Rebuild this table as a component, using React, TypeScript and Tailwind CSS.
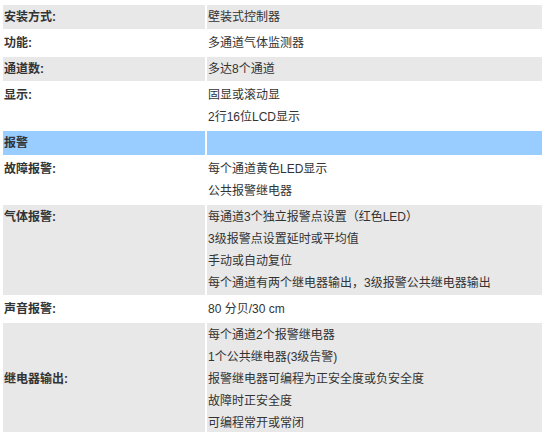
import React from 'react';

type Row = { label: string; lines: string[]; bg: 'gray' | 'white' | 'blue'; middle?: boolean };

const rows: Row[] = [
  { label: '安装方式:', lines: ['壁装式控制器'], bg: 'gray' },
  { label: '功能:', lines: ['多通道气体监测器'], bg: 'white' },
  { label: '通道数:', lines: ['多达8个通道'], bg: 'gray' },
  { label: '显示:', lines: ['固显或滚动显', '2行16位LCD显示'], bg: 'white' },
  { label: '报警', lines: [''], bg: 'blue' },
  { label: '故障报警:', lines: ['每个通道黄色LED显示', '公共报警继电器'], bg: 'white' },
  {
    label: '气体报警:',
    lines: ['每通道3个独立报警点设置（红色LED）', '3级报警点设置延时或平均值', '手动或自动复位', '每个通道有两个继电器输出，3级报警公共继电器输出'],
    bg: 'gray',
  },
  { label: '声音报警:', lines: ['80 分贝/30 cm'], bg: 'white' },
  {
    label: '继电器输出:',
    lines: ['每个通道2个报警继电器', '1个公共继电器(3级告警)', '报警继电器可编程为正安全度或负安全度', '故障时正安全度', '可编程常开或常闭'],
    bg: 'gray',
    middle: true,
  },
];

const bgClass = {
  gray: 'bg-[#e8e8e8]',
  white: 'bg-white',
  blue: 'bg-[#99ccff]',
};

export default function App() {
  return (
    <div
      className="h-[432px] w-[542px] overflow-hidden bg-white pt-[5px] pl-[3px] text-[12px] leading-[22px] text-[#333]"
      style={{ fontFamily: '"Liberation Sans", "Noto Sans CJK SC", sans-serif' }}
    >
      <div className="grid grid-cols-[202px_1fr] gap-[2px]">
        {rows.map((r) => (
          <React.Fragment key={r.label}>
            <div className={`${bgClass[r.bg]} flex py-px pl-px font-bold ${r.middle ? 'items-center' : 'items-start'}`}>
              {r.label}
            </div>
            <div className={`${bgClass[r.bg]} py-px pl-px`}>
              {r.lines.map((l, i) => (
                <div key={i} className="h-[22px] whitespace-nowrap">
                  {l}
                </div>
              ))}
            </div>
          </React.Fragment>
        ))}
      </div>
    </div>
  );
}
